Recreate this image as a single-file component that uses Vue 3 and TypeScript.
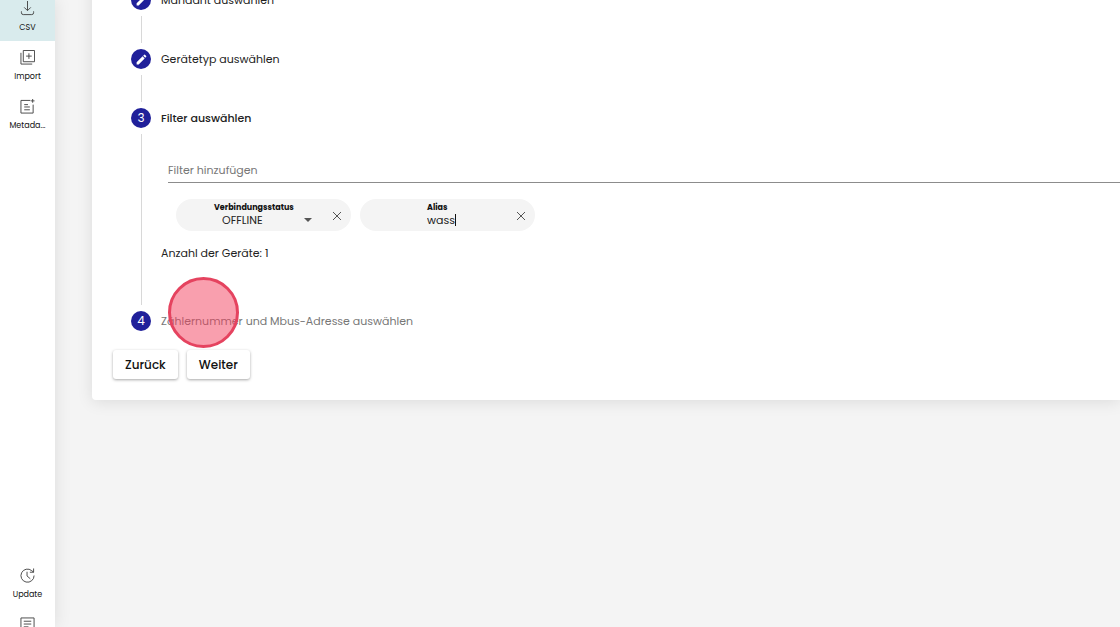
<script setup lang="ts">
import { ref } from 'vue'

const filterText = ref('')
const status = ref('OFFLINE')
const alias = ref('wass')
const deviceCount = 1
</script>

<template>
  <div class="shell">
    <nav class="sidebar" aria-label="Hauptnavigation">
      <div class="group">
        <a href="#csv" class="item active">
          <svg viewBox="0 0 16 16"><path d="M8 0v10M4.500 6.800 8 10.300l3.500-3.500M1.500 11v1.500a2 2 0 0 0 2 2h9a2 2 0 0 0 2-2V11" /></svg>
          <span>CSV</span>
        </a>
        <a href="#import" class="item">
          <svg viewBox="0 0 16 16"><path d="M3.500 .5h12v12h-12zM1 3v12h12M9.500 3.500v6M6.500 6.500h6" /></svg>
          <span>Import</span>
        </a>
        <a href="#metadata" class="item">
          <svg viewBox="0 0 16 16"><path d="M11 1.500H1v13.500h13V6M4.500 6h4M4.500 8.500h6M4.500 11.500h6M13.500 0v4M11.500 2h4" /></svg>
          <span>Metada...</span>
        </a>
      </div>
      <div class="group bottom">
        <a href="#update" class="item">
          <svg viewBox="0 0 16 16"><path d="M12.500 2.800A7 7 0 1 0 15 8M14.500 .5v4h-4M14.500 4.500l-2-1.700M7.500 4v4.500l3.500 3" /></svg>
          <span>Update</span>
        </a>
        <a href="#log" class="item" aria-label="Protokoll">
          <svg viewBox="0 0 16 16"><path d="M1 1h14v14H1zM4 4.500h8M4 7.500h8M4 10.500h5" /></svg>
        </a>
      </div>
    </nav>

    <main class="content">
      <section class="card">
        <ol class="stepper">
          <li>
            <div class="head">
              <i class="badge"><svg viewBox="0 0 24 24"><path d="M3 17.250V21h3.750L17.810 9.940l-3.750-3.750zM20.710 7.040a1 1 0 0 0 0-1.410l-2.340-2.340a1 1 0 0 0-1.410 0l-1.830 1.830 3.750 3.750z" /></svg></i>
              <span class="title">Mandant auswählen</span>
            </div>
            <div class="body"></div>
          </li>
          <li>
            <div class="head">
              <i class="badge"><svg viewBox="0 0 24 24"><path d="M3 17.250V21h3.750L17.810 9.940l-3.750-3.750zM20.710 7.040a1 1 0 0 0 0-1.410l-2.340-2.340a1 1 0 0 0-1.410 0l-1.830 1.830 3.750 3.750z" /></svg></i>
              <span class="title">Gerätetyp auswählen</span>
            </div>
            <div class="body"></div>
          </li>
          <li>
            <div class="head">
              <i class="badge">3</i>
              <span class="title current">Filter auswählen</span>
            </div>
            <div class="body">
              <input v-model="filterText" class="search" type="text" placeholder="Filter hinzufügen" aria-label="Filter hinzufügen" />
              <div class="chips">
                <div class="chip">
                  <div class="field status">
                    <label for="status">Verbindungsstatus</label>
                    <div class="control">
                      <select id="status" v-model="status">
                        <option>OFFLINE</option>
                        <option>ONLINE</option>
                      </select>
                      <svg class="arrow" viewBox="0 0 8 4"><path d="M0 0h8L4 4z" /></svg>
                    </div>
                  </div>
                  <button class="remove" type="button" aria-label="Verbindungsstatus entfernen">
                    <svg viewBox="0 0 8 8"><path d="M0 0l8 8M8 0 0 8" /></svg>
                  </button>
                </div>
                <div class="chip">
                  <div class="field alias">
                    <label for="alias">Alias</label>
                    <div class="control">
                      <input id="alias" v-model="alias" type="text" />
                      <span class="caret"></span>
                    </div>
                  </div>
                  <button class="remove" type="button" aria-label="Alias entfernen">
                    <svg viewBox="0 0 8 8"><path d="M0 0l8 8M8 0 0 8" /></svg>
                  </button>
                </div>
              </div>
              <p class="count">Anzahl der Geräte: {{ deviceCount }}</p>
            </div>
          </li>
          <li>
            <div class="head">
              <i class="badge">4</i>
              <span class="title pending">Zählernummer und Mbus-Adresse auswählen<span class="pointer"></span></span>
            </div>
          </li>
        </ol>
        <div class="actions">
          <button type="button">Zurück</button>
          <button type="button">Weiter</button>
        </div>
      </section>
    </main>
  </div>
</template>

<style>
body {
  margin: 0;
}
</style>

<style scoped>
.shell {
  display: flex;
  height: 100vh;
  overflow: hidden;
  background: #f4f4f4;
  color: #222;
  font: 11px/20px Poppins, Inter, sans-serif;
}
button,
input,
select {
  font: inherit;
  color: inherit;
  padding: 0;
  border: 0;
  background: none;
  outline: none;
}
.sidebar {
  position: relative;
  flex: none;
  width: 55px;
  display: flex;
  flex-direction: column;
  justify-content: space-between;
  background: #fff;
  box-shadow: 0 0 16px rgba(0, 0, 0, 0.1);
}
.group {
  margin-top: -8px;
}
.bottom {
  margin-bottom: -30px;
}
.item {
  box-sizing: border-box;
  height: 49px;
  padding-top: 9px;
  display: flex;
  flex-direction: column;
  align-items: center;
  gap: 6px;
  color: #111;
  text-decoration: none;
  font-size: 8px;
  line-height: 12px;
}
.item svg {
  width: 15px;
  height: 15px;
  flex: none;
  fill: none;
  stroke: #444;
  stroke-width: 1;
}
.active {
  background: #d9ebed;
}
.content {
  flex: 1;
  min-width: 0;
  padding-left: 37px;
}
.card {
  margin-top: -21px;
  padding: 11px 0 21px 39px;
  background: #fff;
  border-radius: 0 0 0 4px;
  box-shadow: 0 2px 16px rgba(0, 0, 0, 0.1);
}
.stepper {
  list-style: none;
  margin: 0;
  padding: 0;
}
.head {
  display: flex;
  align-items: center;
  gap: 10px;
  height: 20px;
}
.badge {
  flex: none;
  display: flex;
  align-items: center;
  justify-content: center;
  width: 20px;
  height: 20px;
  border-radius: 50%;
  background: #20209a;
  color: #fff;
  font-size: 12px;
  font-style: normal;
}
.badge svg {
  width: 13px;
  height: 13px;
  fill: #fff;
}
.title {
  position: relative;
}
.current {
  font-weight: 500;
}
.pending {
  color: #777;
}
.body {
  position: relative;
  min-height: 39px;
  padding-left: 30px;
}
.body::before {
  content: '';
  position: absolute;
  left: 10px;
  top: 6px;
  bottom: 6px;
  width: 1px;
  background: #d8d8d8;
}
.search {
  display: block;
  box-sizing: border-box;
  width: calc(100% - 7px);
  height: 24px;
  margin-left: 7px;
  border-bottom: 1px solid #8c8c8c;
}
.search::placeholder {
  color: #777;
  opacity: 1;
}
li:nth-child(3) .body {
  padding-top: 31px;
  padding-bottom: 48px;
}
.chips {
  display: flex;
  gap: 9px;
  margin: 16px 0 12px 15px;
}
.chip {
  box-sizing: border-box;
  display: flex;
  justify-content: flex-end;
  align-items: flex-start;
  width: 175px;
  height: 32px;
  padding: 3px 10px 0 0;
  border-radius: 16px;
  background: #f4f4f4;
}
.field label {
  display: block;
  font-size: 8px;
  line-height: 12px;
  font-weight: 700;
  color: #111;
}
.field {
  width: 98px;
  margin-right: 21px;
}
.alias {
  width: 80px;
  margin-right: 10px;
}
.control {
  position: relative;
  display: flex;
  align-items: center;
  justify-content: space-between;
  height: 11px;
}
.status .control {
  padding-left: 8px;
}
.control select {
  appearance: none;
  width: 60px;
  height: 16px;
  line-height: 16px;
}
.control input {
  width: 80px;
  height: 16px;
  line-height: 16px;
}
.arrow {
  width: 8px;
  height: 4px;
  fill: #555;
}
.caret {
  position: absolute;
  left: 28px;
  top: 0;
  width: 1px;
  height: 12px;
  background: #111;
}
.remove {
  display: flex;
  margin-top: 10px;
}
.remove svg {
  width: 8px;
  height: 8px;
  overflow: visible;
  fill: none;
  stroke: #555;
  stroke-width: 1;
}
.count {
  margin: 0;
}
.pointer {
  position: absolute;
  left: 7px;
  bottom: -17px;
  box-sizing: border-box;
  width: 71px;
  height: 71px;
  border: 3px solid #e5435f;
  border-radius: 50%;
  background: rgba(244, 63, 94, 0.5);
}
.actions {
  position: relative;
  display: flex;
  gap: 9px;
  margin: 19px 0 0 -18px;
}
.actions button {
  height: 29px;
  padding: 0 12px;
  border-radius: 3px;
  background: #fff;
  color: #111;
  font-size: 12px;
  font-weight: 500;
  box-shadow: 0 1px 3px rgba(0, 0, 0, 0.35);
}
</style>
